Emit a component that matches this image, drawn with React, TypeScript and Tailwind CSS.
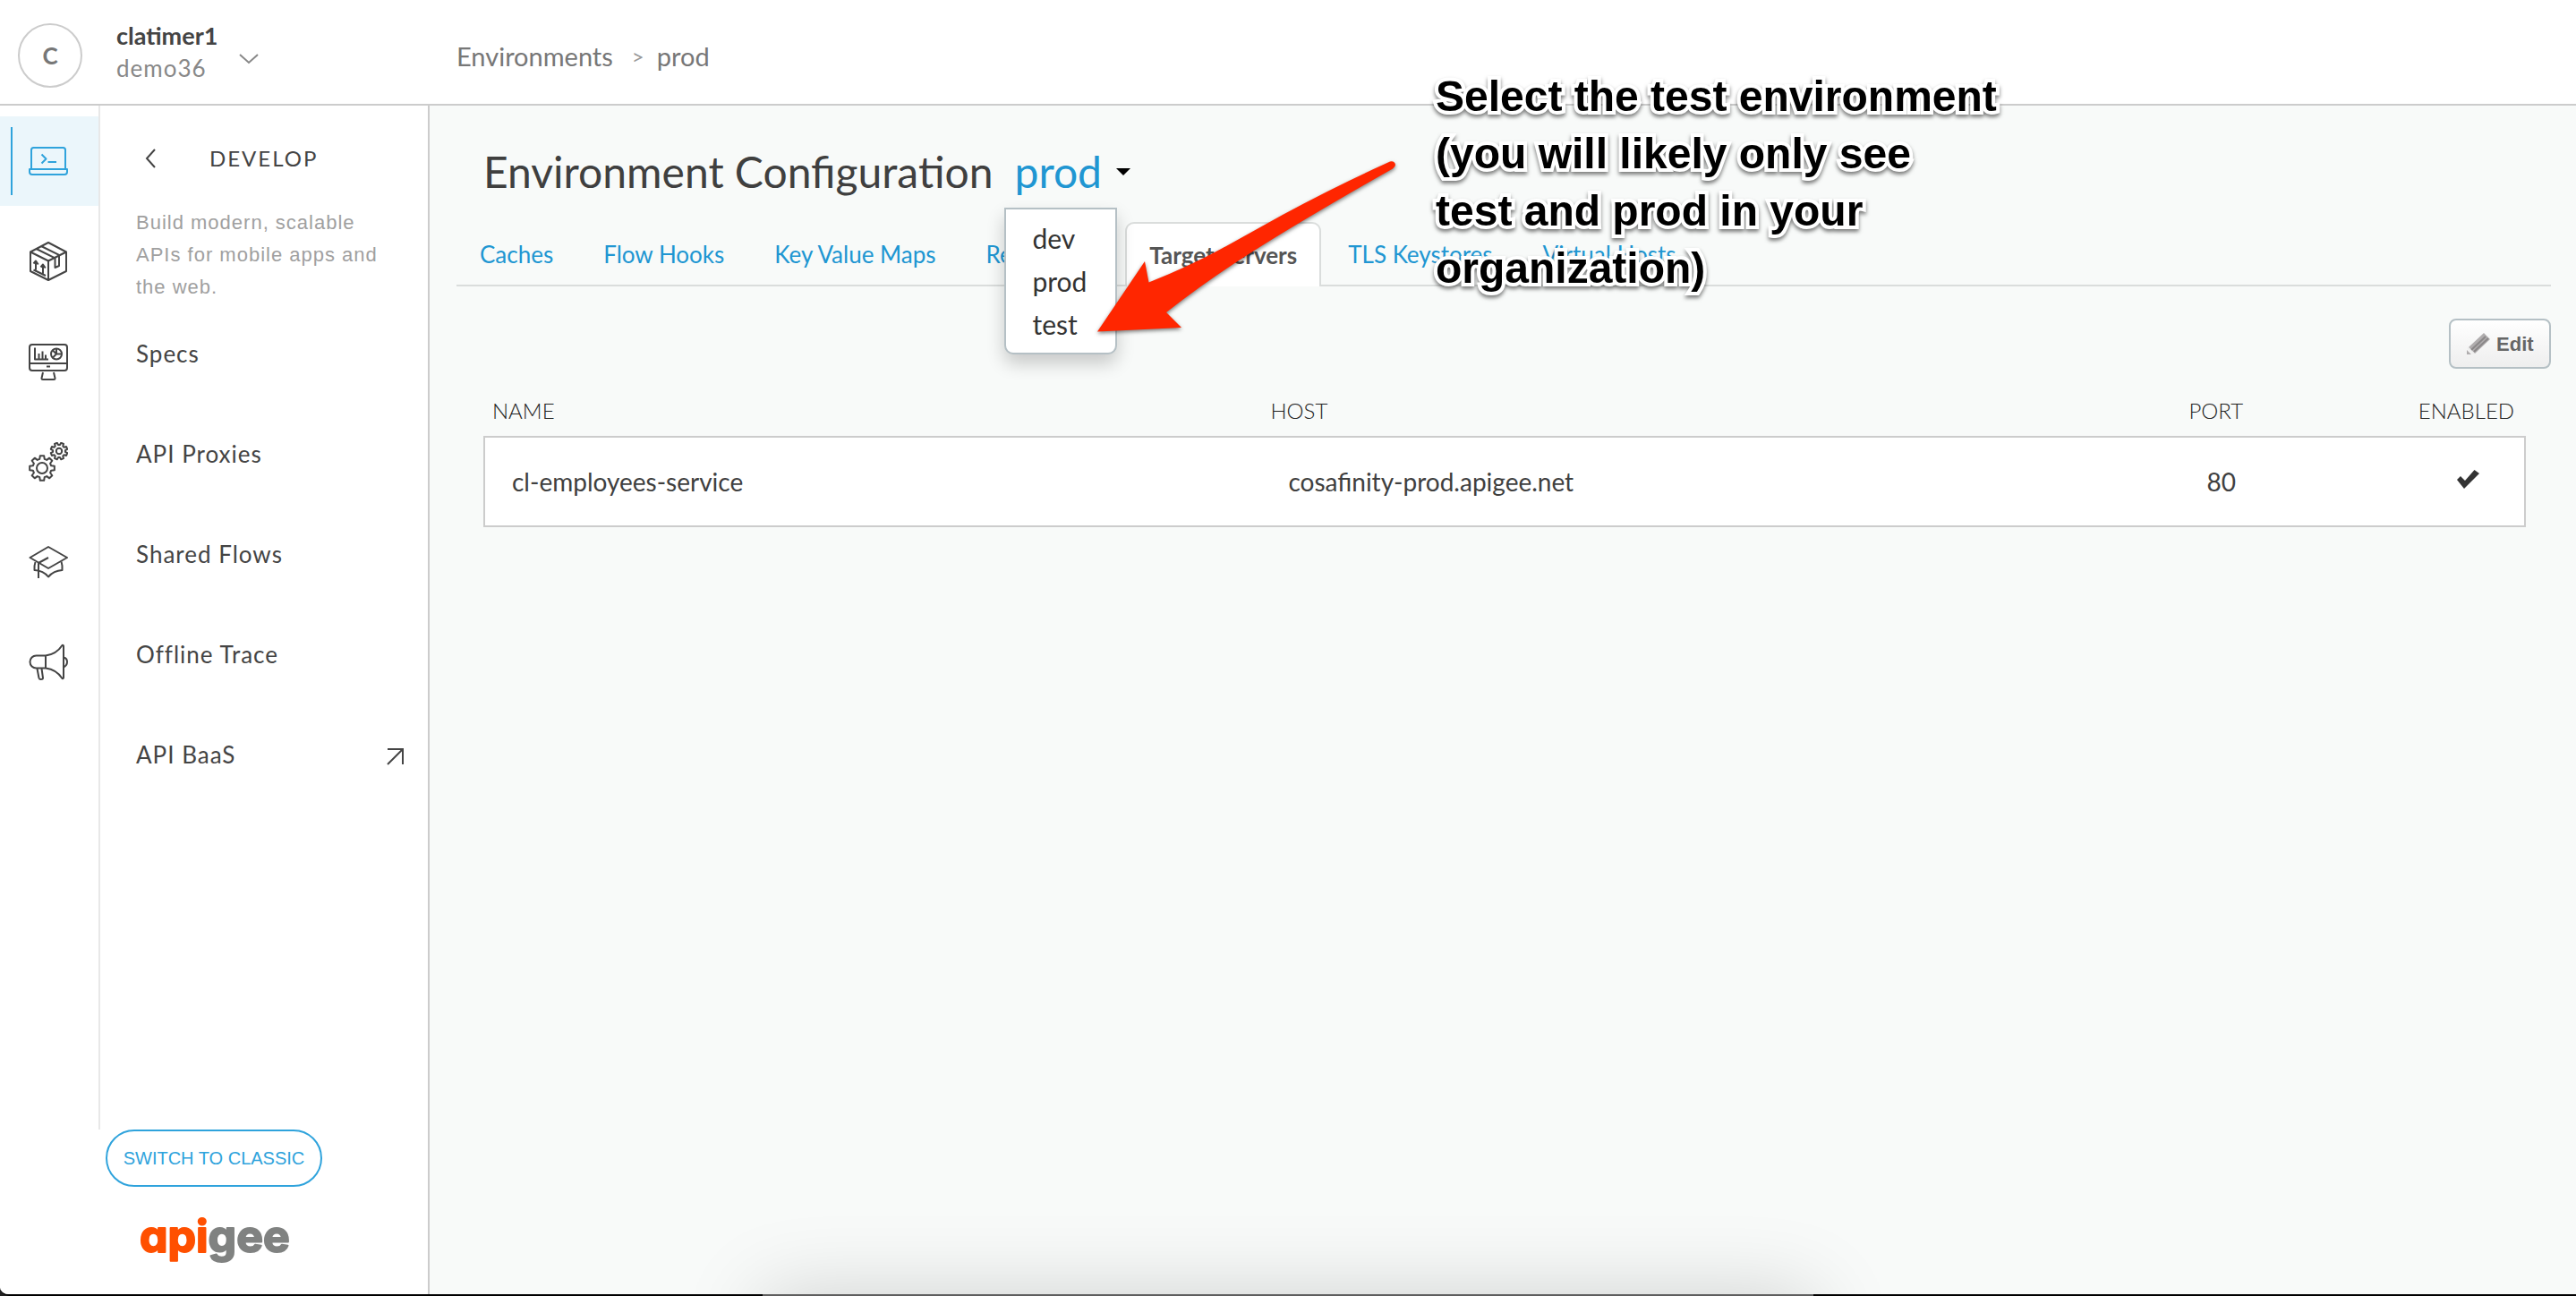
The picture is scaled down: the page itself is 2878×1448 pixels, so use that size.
import React from "react";

const GEAR_TEETH = [0, 45, 90, 135, 180, 225, 270, 315];

function gearPath(cx: number, cy: number, outer: number, inner: number, turn: number) {
  const point = (r: number, deg: number) => {
    const a = ((deg + turn) * Math.PI) / 180;
    return `${(cx + r * Math.cos(a)).toFixed(2)} ${(cy + r * Math.sin(a)).toFixed(2)}`;
  };
  return (
    GEAR_TEETH.map(
      (t, i) =>
        `${i ? "L" : "M"}${point(inner, t - 15)}L${point(outer, t - 9)}L${point(outer, t + 9)}L${point(inner, t + 15)}`
    ).join("") + "Z"
  );
}

function RailSvg({ children }: { children: React.ReactNode }) {
  return (
    <svg
      viewBox="0 0 44 44"
      className="size-11 shrink-0"
      fill="none"
      stroke="currentColor"
      strokeWidth="2"
      strokeLinejoin="round"
      aria-hidden="true"
    >
      {children}
    </svg>
  );
}

const TerminalIcon = () => (
  <RailSvg>
    <path d="M3 31V9.500q0-2.500 2.500-2.500h33q2.500 0 2.500 2.500V31" />
    <path d="M1 31h42v3q0 3-3 3H4q-3 0-3-3z" />
    <path d="M14.500 14.500l5 5-5 5M21.500 23h9.500" />
  </RailSvg>
);

const BoxIcon = () => (
  <RailSvg>
    <path d="M2 11.500L22 1l20 10.500V33L22 43 2 33zM2 11.500L22 21.500l20-10M22 21.500V43" />
    <path d="M8.500 8L29 18.200M14 5l20.500 10.200" />
    <path d="M29.500 18v11l4.500-2V15.500" />
    <path d="M5.500 24.500L8 21.500l2.700 4M8 22v9.500M13.500 28.500l2.500-3 2.700 4M16 26v9.500M5.500 31.500L19 38" />
  </RailSvg>
);

const MonitorIcon = () => (
  <RailSvg>
    <path d="M4 3h36q3 0 3 3v23q0 3-3 3H4q-3 0-3-3V6q0-3 3-3zM1 24h42M20 27.500h4" />
    <path d="M16 34l-1.500 6.500q0 1.500 1.500 1.500h12q1.500 0 1.500-1.500L28 34" />
    <path d="M7 6.500V19.500h15M11.500 19v-6M15.500 19V10.500M19 19v-4.500" />
    <circle cx="31" cy="13.500" r="6" />
    <path d="M31 7.500v6h6M31 13.500l-4.500 4.500M31 13.500l-4-4" />
  </RailSvg>
);

const GearsIcon = () => (
  <RailSvg>
    <path d={gearPath(15, 29, 14, 10.500, 0)} />
    <circle cx="15" cy="29" r="6" />
    <path d={gearPath(34, 10, 9.500, 7, 22.5)} />
    <circle cx="34" cy="10" r="3.200" />
  </RailSvg>
);

const CapIcon = () => (
  <RailSvg>
    <path d="M1.500 17L22 5l21 12-21 12zM22 17l-11 6v17" />
    <path d="M7.500 22q-1.500 4-1 9 10 .5 15.500 7.500 6-7 15.500-7.500.5-5-1-9.500" />
  </RailSvg>
);

const HornIcon = () => (
  <RailSvg>
    <path d="M19 14.500H8.500a7 7 0 0 0 0 14H19zM19 14.500Q31 13 37.500 3q1.500-.5 1.500 1v35q0 1.500-1.500 1Q31 30 19 28.500" />
    <path d="M9.500 29l2 10.500q.5 1.500 2 1.500 2.500 0 2.500-1.500L14.500 29" />
    <path d="M39 16.500q4 1 4 5t-4 6" />
  </RailSvg>
);

const RAIL = [
  { label: "Develop", Icon: TerminalIcon },
  { label: "Publish", Icon: BoxIcon },
  { label: "Analyze", Icon: MonitorIcon },
  { label: "Admin", Icon: GearsIcon },
  { label: "Learn", Icon: CapIcon },
  { label: "News", Icon: HornIcon },
];

const NAV = ["Specs", "API Proxies", "Shared Flows", "Offline Trace", "API BaaS"];

const TABS = [
  "Caches",
  "Flow Hooks",
  "Key Value Maps",
  "References",
  "Target Servers",
  "TLS Keystores",
  "Virtual Hosts",
];

function Header() {
  return (
    <header className="flex h-[118px] items-center border-b-2 border-[#cccccc] bg-white pt-2">
      <div className="flex w-[510px] shrink-0 items-center pl-5">
        <div className="flex size-[72px] items-center justify-center rounded-full border-2 border-[#cccccc] text-[26px] font-bold text-[#777777]">
          C
        </div>
        <button type="button" className="ml-[38px] flex items-center gap-[24px] text-left">
          <span className="flex flex-col pb-2 leading-9">
            <span className="text-[27px] font-bold text-[#444444]">clatimer1</span>
            <span className="text-[26px] tracking-[1px] text-[#888888]">demo36</span>
          </span>
          <svg viewBox="0 0 22 12" className="mt-2 h-3 w-[22px]" fill="none" stroke="#888888" strokeWidth="2" aria-hidden="true">
            <path d="M1 1l10 9L21 1" />
          </svg>
        </button>
      </div>
      <nav aria-label="Breadcrumb" className="flex items-center pt-[2px] text-[29px] text-[#777777]">
        <a href="#environments">Environments</a>
        <span className="ml-[21px] text-[24px] text-[#999999]">&gt;</span>
        <span className="ml-[14px]">prod</span>
      </nav>
    </header>
  );
}

function Sidebar() {
  return (
    <aside className="flex w-[480px] shrink-0 flex-col border-r-2 border-[#cccccc] bg-white">
      <div className="flex grow">
        <nav aria-label="Sections" className="flex w-[112px] shrink-0 flex-col gap-3 border-r-2 border-[#e8e8e8] pt-3 text-[#444444]">
          {RAIL.map(({ label, Icon }, i) => (
            <a
              key={label}
              href={`#${label.toLowerCase()}`}
              aria-label={label}
              className={
                i === 0
                  ? "flex h-[100px] items-center bg-[#ebf6fb] pl-3 text-[#2fa3dc]"
                  : "flex h-[100px] items-center pl-8"
              }
            >
              {i === 0 && <span className="mr-[18px] h-[76px] w-[2px] bg-[#2fa3dc]" />}
              <Icon />
            </a>
          ))}
        </nav>
        <div className="flex min-w-0 grow flex-col pt-[37px] text-[#444444]">
          <div className="flex h-11 items-center pl-[50px]">
            <button type="button" aria-label="Back">
              <svg viewBox="0 0 12 22" className="h-[22px] w-3" fill="none" stroke="currentColor" strokeWidth="2" aria-hidden="true">
                <path d="M11 1L2 11l9 10" />
              </svg>
            </button>
            <h2 className="ml-[60px] text-[24px] tracking-[2px]">DEVELOP</h2>
          </div>
          <p className="mt-8 pr-8 pl-10 font-['Liberation_Sans',sans-serif] text-[22px] leading-9 tracking-[1px] text-[#a0a0a0]">
            Build modern, scalable APIs for mobile apps and the web.
          </p>
          <ul>
            {NAV.map((item) => (
              <li key={item}>
                <a href={`#${item.toLowerCase().replace(" ", "-")}`} className="flex h-28 items-center justify-between pr-[26px] pl-10 text-[26px] tracking-[1px]">
                  {item}
                  {item === "API BaaS" && (
                    <svg viewBox="0 0 20 20" className="mt-1 size-5" fill="none" stroke="currentColor" strokeWidth="2" aria-hidden="true">
                      <path d="M1 2h17v17M18 2L1 19" />
                    </svg>
                  )}
                </a>
              </li>
            ))}
          </ul>
        </div>
      </div>
      <div className="flex h-[184px] flex-col pl-[118px]">
        <button type="button" className="h-16 w-[242px] rounded-[32px] border-2 border-[#2fa3dc] font-['Liberation_Sans',sans-serif] text-[20px] text-[#2fa3dc]">
          SWITCH TO CLASSIC
        </button>
        <svg viewBox="0 0 190 80" className="mt-[24px] ml-[34px] h-20 w-[190px]" role="img" aria-label="apigee">
          <text
            x="4"
            y="49"
            fontSize="50"
            fontWeight="700"
            strokeWidth="2"
            strokeLinejoin="round"
            className="font-['Inter',sans-serif] [font-feature-settings:'cv11']"
          >
            <tspan fill="#ff5000" stroke="#ff5000">api</tspan>
            <tspan fill="#808281" stroke="#808281">gee</tspan>
          </text>
        </svg>
      </div>
    </aside>
  );
}

function EnvironmentMenu() {
  return (
    <div className="relative ml-6">
      <button type="button" aria-expanded="true" className="flex items-center gap-4 text-[48px] leading-[60px] text-[#2096d2]">
        prod
        <svg viewBox="0 0 16 8" className="h-2 w-4" aria-hidden="true">
          <path d="M0 0h16L8 8z" fill="#000000" />
        </svg>
      </button>
      <ul className="absolute top-[70px] left-[-11px] z-10 flex w-[126px] flex-col rounded-b-[10px] border-2 border-[#b5c0c5] bg-white py-2 text-[30px] text-[#333333] shadow-[0_10px_20px_rgba(0,0,0,0.2)]">
        {["dev", "prod", "test"].map((env) => (
          <li key={env}>
            <button type="button" className="flex h-12 w-full items-center pl-[29px]">
              {env}
            </button>
          </li>
        ))}
      </ul>
    </div>
  );
}

function Annotation() {
  return (
    <>
      <svg
        viewBox="0 0 360 230"
        className="absolute top-[160px] left-[1220px] z-20 h-[230px] w-[360px] drop-shadow-[0_2px_2px_rgba(0,0,0,0.5)]"
        aria-hidden="true"
      >
        <path
          d="M6 210.500L59 132l4.500 23.500Q108 138 150 115L213 80Q270 49 333 20.500 338 19.500 339 24 339 26.500 336 28.500 280 60 220 96 190 114 158 135 120 160 83 189L100 206z"
          fill="#ff2600"
        />
      </svg>
      <p className="absolute top-[76px] left-[1604px] z-30 w-[650px] font-['Liberation_Sans',sans-serif] text-[48px] leading-[64px] font-bold text-black [-webkit-text-stroke:8px_white] [paint-order:stroke_fill] drop-shadow-[0_3px_2px_rgba(0,0,0,0.5)]">
        Select the test environment
        <br />
        (you will likely only see
        <br />
        test and prod in your
        <br />
        organization)
      </p>
    </>
  );
}

function Main() {
  return (
    <main className="min-w-0 grow bg-[#f8faf9] pr-7 pl-[30px]">
      <div className="flex h-[130px] items-center pt-[18px] pl-[30px] text-[#3f3f3f]">
        <h1 className="text-[48px] leading-[60px]">Environment Configuration</h1>
        <EnvironmentMenu />
      </div>
      <nav aria-label="Configuration" className="flex h-[72px] gap-1 border-b-2 border-[#dadddc] text-[26px]">
        {TABS.map((tab) =>
          tab === "Target Servers" ? (
            <a
              key={tab}
              href="#target-servers"
              aria-current="page"
              className="-mb-[2px] flex items-center rounded-t-[10px] border-2 border-b-0 border-[#dadddc] bg-white px-[25px] font-bold text-[#555555]"
            >
              {tab}
            </a>
          ) : (
            <a
              key={tab}
              href={`#${tab.toLowerCase().replaceAll(" ", "-")}`}
              className="flex items-center px-[26px] pt-[2px] text-[#2096d2]"
            >
              {tab}
            </a>
          )
        )}
      </nav>
      <div className="flex justify-end pt-9">
        <button
          type="button"
          className="flex h-14 w-[114px] items-center gap-[7px] rounded-[8px] border-2 border-[#b5c0c5] bg-linear-to-b from-white to-[#eeeeee] pl-[18px] font-['Liberation_Sans',sans-serif] text-[22px] font-bold text-[#666666]"
        >
          <svg viewBox="0 0 26 26" className="size-[26px]" aria-hidden="true">
            <path d="M0 25v-5l5 5zM2 17L19 1l7 7L9 24z" fill="#b0adae" />
            <path d="M5 20L21 5M8 22L24 7" stroke="#8a8788" strokeWidth="2" />
            <path d="M1 17.500l7 7" stroke="#eeeeee" strokeWidth="2" />
          </svg>
          Edit
        </button>
      </div>
      <div className="pr-7 pl-[30px]">
        <table className="w-full table-fixed border-collapse text-left">
          <colgroup>
            <col className="w-[38%]" />
            <col className="w-[45%]" />
            <col className="w-[9%]" />
            <col />
          </colgroup>
          <thead>
            <tr className="h-[76px] text-[24px] font-light text-[#222222]">
              <th className="pt-[18px] pl-[9px] font-light">NAME</th>
              <th className="pt-[18px] pl-3 font-light">HOST</th>
              <th className="pt-[18px] pl-3 font-light">PORT</th>
              <th className="pt-[18px] pr-3 text-right font-light">ENABLED</th>
            </tr>
          </thead>
          <tbody>
            <tr className="h-[100px] border-2 border-[#cccccc] bg-white text-[28px] text-[#3f3f3f]">
              <td className="pl-[30px]">cl-employees-service</td>
              <td className="pl-8">cosafinity-prod.apigee.net</td>
              <td className="pl-8">80</td>
              <td className="pr-[50px] pb-[6px]">
                <svg viewBox="0 0 26 22" className="ml-auto h-[22px] w-[26px]" role="img" aria-label="Enabled">
                  <path d="M1 12l4-4 5 5L20.500 1 26 5 9 22z" fill="#333333" />
                </svg>
              </td>
            </tr>
          </tbody>
        </table>
      </div>
    </main>
  );
}

export default function App() {
  return (
    <div className="relative flex min-h-screen flex-col overflow-hidden bg-[#222222] font-['Lato',sans-serif]">
      <div className="flex grow flex-col overflow-hidden rounded-bl-[10px] border-b-2 border-black bg-white">
        <Header />
        <div className="flex grow">
          <Sidebar />
          <Main />
        </div>
      </div>
      <Annotation />
      <div className="absolute bottom-[-98px] left-1/2 h-[100px] w-[1174px] -translate-x-1/2 bg-[#5e5e5e] shadow-[0_0_90px_rgba(0,0,0,0.17)]" />
    </div>
  );
}
